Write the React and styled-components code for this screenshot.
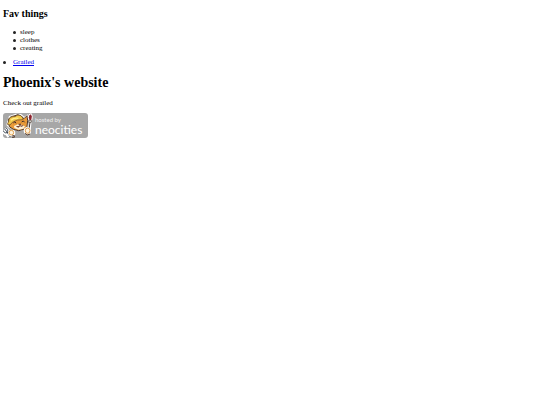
import React from "react";
import styled, { createGlobalStyle } from "styled-components";

const GlobalStyle = createGlobalStyle`
  body {
    margin: 0;
    background: #fff;
    color: #000;
    font: 7px/8px "Liberation Serif", "Times New Roman", serif;
  }
`;

const Page = styled.main`
  padding: 8px 3px;
`;

const SectionTitle = styled.h2`
  margin: 0 0 8px;
  font-size: 10px;
  line-height: 12px;
`;

const SiteTitle = styled.h1`
  margin: 9px 0 8px;
  font-size: 14px;
  line-height: 16px;
`;

const List = styled.ul`
  margin: 0;
  padding: 0;
  list-style: none;
`;

const Item = styled.li`
  display: flex;
  align-items: center;
  padding-left: ${(p) => (p.$nested ? "10px" : "0")};

  &::before {
    content: "";
    width: 3px;
    height: 3px;
    margin-right: ${(p) => (p.$nested ? "4px" : "7px")};
    border-radius: 50%;
    background: #222;
  }
`;

const Nav = styled(List)`
  margin-top: 6px;
`;

const Link = styled.a`
  color: #0000ee;
`;

const Intro = styled.p`
  margin: 0 0 6px;
`;

const HostBadge = styled.a`
  display: flex;
  align-items: center;
  width: 85px;
  height: 25px;
  border-radius: 3px;
  background: #a7a7a7;
  color: #fff;
  text-decoration: none;
  font-family: Lato, "Open Sans", sans-serif;
`;

const Mascot = styled.svg`
  flex: none;
  width: 32px;
  height: 25px;
`;

const Wordmark = styled.span`
  display: flex;
  flex-direction: column;
`;

const HostedBy = styled.small`
  font-size: 6px;
  line-height: 8px;
  color: #f0f0f0;
`;

const Brand = styled.span`
  font-size: 12px;
  line-height: 12px;
`;

function Cat() {
  return (
    <Mascot viewBox="0 0 96 75" aria-hidden="true">
      <path d="M13 25 18 9 28 6 38 2 54 3 64 11 75 4 76 20 75 39 67 49 51 54 34 51 18 44 10 36Z" fill="#fff" />
      <path d="M17 28C13 17 23 10 33 9l11-4 10 4 9 8 9-9 2 15-2 17-9 9-16 4-16-4-12-8Z" fill="#e99a39" stroke="#493329" strokeWidth="3" />
      <path d="M17 25c0-11 9-15 19-14 9-9 24-4 24 9l-17 1-15 7-7 8-8-2Z" fill="#f2c84b" stroke="#604326" strokeWidth="2" />
      <path d="M24 22q9-9 22-6" fill="none" stroke="#fff08c" strokeWidth="4" />
      <path d="m45 34 11 1 10 5-5 7-14 3-13-5-1-6Z" fill="#fff2d9" />
      <path d="m31 30 5-4 3 5M56 27l5-3 4 4" fill="none" stroke="#42302a" strokeWidth="3" />
      <path d="m47 34 7-1-3 4Zm-7 6q7 6 11-2 5 5 10-1" fill="#8e442f" stroke="#55352c" strokeWidth="2" />
      <path d="m5 48 10 14M0 55l6 7 9-1 0-9-6-7m1 17 7 10" fill="none" stroke="#fff" strokeWidth="8" strokeLinejoin="round" />
      <path d="m5 48 9 11M1 54l6 6 8-2-1-8-5-6m4 15 8 12" fill="none" stroke="#3b4653" strokeWidth="3" />
      <path d="m82 23-4 39" stroke="#fff" strokeWidth="8" />
      <path d="m81 26-4 35" stroke="#48352e" strokeWidth="3" />
      <path d="m78 5 7-3 3 9-2 12-8-1-2-9Z" fill="#8e2530" stroke="#fff" strokeWidth="3" />
      <path d="m78 21 8 2-2 6-7-1Z" fill="#d9d8d2" stroke="#55453d" strokeWidth="2" />
      <ellipse cx="26" cy="60" rx="11" ry="10" fill="#fff" />
      <ellipse cx="25" cy="59" rx="7" ry="7" fill="#fff4df" stroke="#e0a04e" strokeWidth="3" />
      <ellipse cx="73" cy="53" rx="11" ry="11" fill="#fff" />
      <ellipse cx="74" cy="53" rx="7" ry="8" fill="#fff4df" stroke="#df9b4b" strokeWidth="3" />
      <path d="M28 68h6v5h-7M66 61l7 5 8-3" fill="none" stroke="#594136" strokeWidth="3" />
    </Mascot>
  );
}

export default function App() {
  return (
    <>
      <GlobalStyle />
      <Page>
        <SectionTitle>Fav things</SectionTitle>
        <List>
          <Item $nested>sleep</Item>
          <Item $nested>clothes</Item>
          <Item $nested>creating</Item>
        </List>
        <Nav>
          <Item>
            <Link href="#grailed">Grailed</Link>
          </Item>
        </Nav>
        <SiteTitle>Phoenix's website</SiteTitle>
        <Intro>Check out grailed</Intro>
        <HostBadge href="#neocities">
          <Cat />
          <Wordmark>
            <HostedBy>hosted by</HostedBy>
            <Brand>neocities</Brand>
          </Wordmark>
        </HostBadge>
      </Page>
    </>
  );
}
